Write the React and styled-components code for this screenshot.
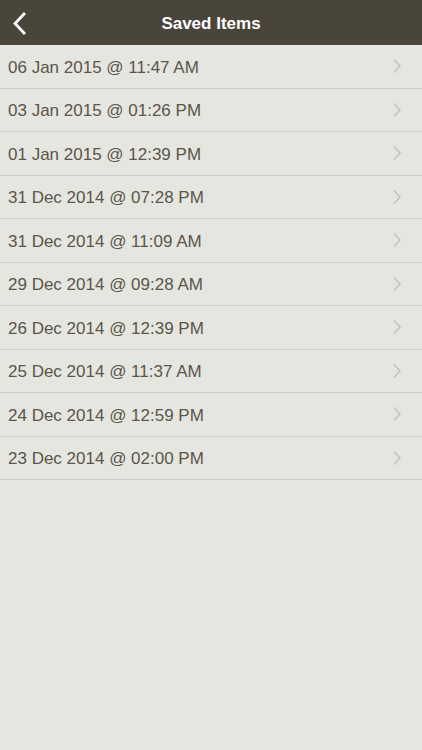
import React from 'react'
import styled, { createGlobalStyle } from 'styled-components'

// Global
const GlobalStyle = createGlobalStyle`
  html, body {
    margin: 0;
    padding: 0;
    background: #e5e6e0;
  }
  * {
    box-sizing: border-box;
  }
`

// Style
const Screen = styled.div`
  width: 422px;
  min-height: 750px;
  background: #e5e6e0;
  font-family: 'Liberation Sans', Arial, sans-serif;
`
const NavBar = styled.header`
  height: 45px;
  background: #4a453b;
  display: grid;
  grid-template-columns: 60px 1fr 60px;
  align-items: center;
`
const BackButton = styled.button`
  background: none;
  border: 0;
  padding: 0 0 0 12px;
  height: 45px;
  display: flex;
  align-items: center;
  cursor: pointer;
`
const Title = styled.h1`
  margin: 0;
  text-align: center;
  color: #ffffff;
  font-size: 17px;
  font-weight: bold;
  padding-top: 2px;
`
const List = styled.ul`
  list-style: none;
  margin: 0;
  padding: 0;
`
const Row = styled.li`
  height: 43.5px;
  border-bottom: 1px solid #cfd0ca;
  display: flex;
  align-items: center;
  justify-content: space-between;
  padding: 0 20px 0 8px;
`
const RowLabel = styled.span`
  color: #5b554a;
  font-size: 17px;
  padding-top: 3px;
`

const items = [
  '06 Jan 2015 @ 11:47 AM',
  '03 Jan 2015 @ 01:26 PM',
  '01 Jan 2015 @ 12:39 PM',
  '31 Dec 2014 @ 07:28 PM',
  '31 Dec 2014 @ 11:09 AM',
  '29 Dec 2014 @ 09:28 AM',
  '26 Dec 2014 @ 12:39 PM',
  '25 Dec 2014 @ 11:37 AM',
  '24 Dec 2014 @ 12:59 PM',
  '23 Dec 2014 @ 02:00 PM',
]

function BackIcon() {
  return (
    <svg width="16" height="24" viewBox="0 0 16 24">
      <path
        d="M12 3 L3 12.5 L12 22"
        fill="none"
        stroke="#ffffff"
        strokeWidth="2.8"
        strokeLinecap="square"
      />
    </svg>
  )
}

function Chevron() {
  return (
    <svg width="10" height="16" viewBox="0 0 10 16">
      <path
        d="M2 1.5 L8 8 L2 14.5"
        fill="none"
        stroke="#c3c4bf"
        strokeWidth="1.6"
      />
    </svg>
  )
}

// Composant
function App() {
  return (
    <>
      <GlobalStyle />
      <Screen>
        <NavBar>
          <BackButton aria-label="Back">
            <BackIcon />
          </BackButton>
          <Title>Saved Items</Title>
          <div />
        </NavBar>
        <List>
          {items.map((item, id) => (
            <Row key={id}>
              <RowLabel>{item}</RowLabel>
              <Chevron />
            </Row>
          ))}
        </List>
      </Screen>
    </>
  )
}

export default App
